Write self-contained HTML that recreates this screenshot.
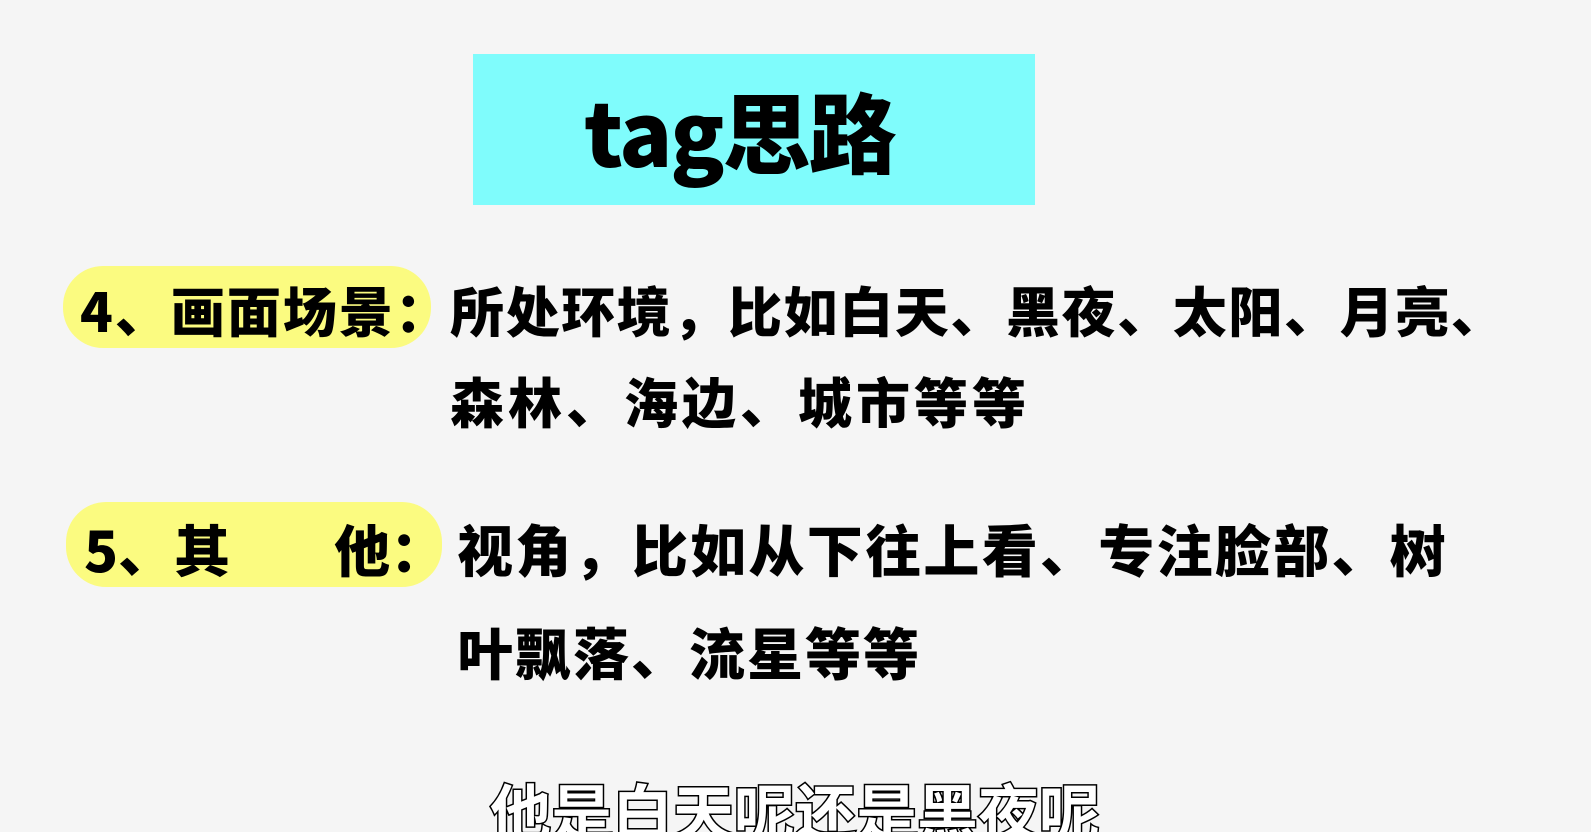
<!DOCTYPE html>
<html><head><meta charset="utf-8"><style>
html,body{margin:0;padding:0;width:1591px;height:832px;overflow:hidden;background:#f5f5f5;}
body{position:relative;font-family:"Liberation Sans","Noto Sans CJK SC",sans-serif;color:#000;}
.a{position:absolute;white-space:nowrap;}
.t{font-family:"Noto Sans CJK SC",sans-serif;font-weight:900;}
</style></head><body>
<div class="a" style="left:473px;top:54px;width:562px;height:151px;background:#7ffcfc;"></div>
<div class="a t" style="left:584px;top:54px;height:151px;line-height:151px;font-size:88px;letter-spacing:-2px;">tag思路</div>

<div class="a" style="left:63px;top:266px;width:368px;height:82px;border-radius:40px;background:#fbfb80;"></div>
<div class="a t" style="left:80px;top:277px;font-size:54px;line-height:64px;letter-spacing:2px;">4、画面场景：</div>
<div class="a t" style="left:450px;top:277px;font-size:54px;line-height:64px;letter-spacing:1.6px;">所处环境，比如白天、黑夜、太阳、月亮、</div>
<div class="a t" style="left:450px;top:368px;font-size:54px;line-height:64px;letter-spacing:4px;">森林、海边、城市等等</div>

<div class="a" style="left:66px;top:502px;width:376px;height:85px;border-radius:40px;background:#fbfb80;"></div>
<div class="a t" style="left:84px;top:516px;font-size:56px;line-height:66px;">5、其<span style="display:inline-block;width:104px"></span>他：</div>
<div class="a t" style="left:457px;top:516px;font-size:56px;line-height:66px;letter-spacing:2.3px;">视角，比如从下往上看、专注脸部、树</div>
<div class="a t" style="left:457px;top:619px;font-size:56px;line-height:66px;letter-spacing:2px;">叶飘落、流星等等</div>

<div class="a" style="left:490px;top:774px;font-family:'Noto Sans CJK SC',sans-serif;font-weight:700;font-size:61px;line-height:70px;color:#fff;-webkit-text-stroke:3px #000;paint-order:stroke fill;">他是白天呢还是黑夜呢</div>
</body></html>
